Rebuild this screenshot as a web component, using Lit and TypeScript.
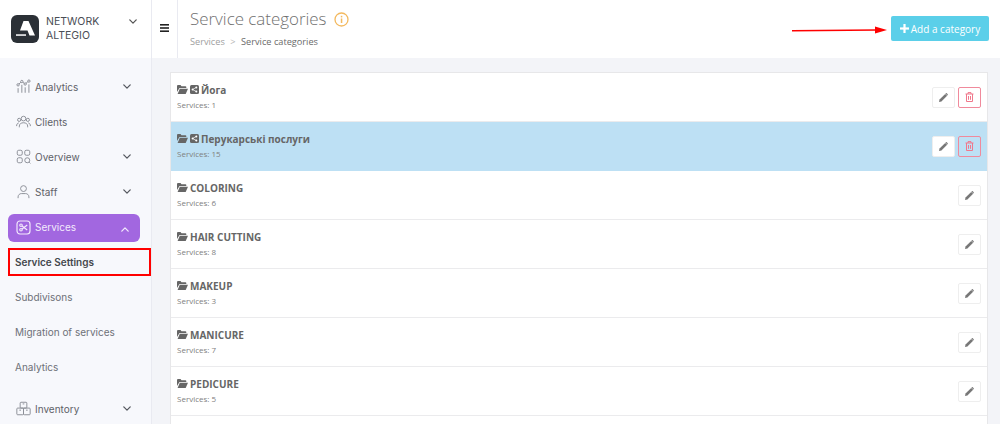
import { LitElement, html, css, svg } from "lit";
import { customElement } from "lit/decorators.js";

const chev = (up = false) => html`<svg class="chev" width="8" height="5" viewBox="0 0 10 6" fill="none" stroke="currentColor" stroke-width="1.600" stroke-linecap="round" stroke-linejoin="round"><path d="${up ? "M1 5l4-4 4 4" : "M1 1l4 4 4-4"}"/></svg>`;

const icons: Record<string, unknown> = {
  analytics: svg`<circle cx="2.500" cy="7" r="1.400"/><circle cx="7" cy="3" r="1.400"/><circle cx="11" cy="6" r="1.400"/><circle cx="15.500" cy="2.500" r="1.400"/><path d="M3.600 6l2.300-2.200M8.100 3.800l1.800 1.400M12 5.200l2.300-2M2.500 11v5.500M7 7v9.500M11 10v6.500M15.500 6.500v10"/>`,
  clients: svg`<circle cx="9" cy="5.500" r="2.800"/><circle cx="3.800" cy="7" r="1.900"/><circle cx="14.200" cy="7" r="1.900"/><path d="M4 16v-1.500C4 12 6 10.500 9 10.500s5 1.500 5 4V16M.7 14.500c0-2.200 1-3.600 2.600-3.800M17.300 14.500c0-2.200-1-3.600-2.600-3.800"/>`,
  overview: svg`<rect x="1.500" y="1.500" width="6" height="6" rx="1.800"/><rect x="10.500" y="1.500" width="6" height="6" rx="1.800"/><rect x="1.500" y="10.500" width="6" height="6" rx="1.800"/><circle cx="13.500" cy="13.500" r="3"/><path d="M15.800 15.800l1.500 1.500"/>`,
  staff: svg`<circle cx="9" cy="5.500" r="3.500"/><path d="M2.500 17v-1.500c0-2.500 2-4 4-4h5c2 0 4 1.500 4 4V17"/>`,
  inventory: svg`<rect x="5" y="1.500" width="8" height="7" rx="1"/><rect x="1" y="8.500" width="8" height="8" rx="1"/><rect x="9" y="8.500" width="8" height="8" rx="1"/><path d="M8 3.500h2M4 11h2M12 11h2"/>`,
};

const sideIcon = (n: string) => html`<svg class="nav-icon" width="15" height="15" viewBox="0 0 18 18" fill="none" stroke="currentColor" stroke-width="1.150">${icons[n]}</svg>`;

const folder = html`<svg class="fi" width="11" height="9" viewBox="0 0 11 9" fill="#666"><path d="M0 1a1 1 0 0 1 1-1h2.500l1 1.200H8.500a.8.8 0 0 1 .8.8V3H2.500L0 7z"/><path d="M2.800 3.700H11L8.700 9H.6z"/></svg>`;
const share = html`<svg class="fi" width="9" height="9" viewBox="0 0 9 9"><rect width="9" height="9" rx="1.500" fill="#666"/><g fill="#fff"><circle cx="6.300" cy="2.400" r="1"/><circle cx="6.300" cy="6.600" r="1"/><circle cx="2.600" cy="4.500" r="1"/></g><path d="M6.300 2.400L2.600 4.500l3.700 2.100" stroke="#fff" stroke-width=".7" fill="none"/></svg>`;
const pencil = html`<svg width="9" height="9" viewBox="0 0 10 10" fill="#777"><path d="M0 10l.6-2.700L6.900 1l2.100 2.100-6.300 6.300z"/><path d="M7.500.4a.9.9 0 0 1 1.200 0l.9.900a.9.9 0 0 1 0 1.200l-.3.300L7.200.7z"/></svg>`;
const trash = html`<svg width="9" height="10" viewBox="0 0 9 10" fill="none" stroke="#f0788c" stroke-width="1"><path d="M.5 2h8M3 2V.6h3V2M1.500 2v7.500h6V2M3.500 4v3.800M5.500 4v3.800"/></svg>`;

const rows = [
  { name: "Йога", n: 1, shared: true },
  { name: "Перукарські послуги", n: 15, shared: true, hl: true },
  { name: "COLORING", n: 6 },
  { name: "HAIR CUTTING", n: 8 },
  { name: "MAKEUP", n: 3 },
  { name: "MANICURE", n: 7 },
  { name: "PEDICURE", n: 5 },
  { name: "", n: -1 },
];

@customElement("app-root")
export class AppRoot extends LitElement {
  static styles = css`
    :host { display: block; width: 1000px; height: 424px; overflow: hidden; position: relative; background: #f3f4f8; font-family: "Open Sans", sans-serif; }
    .app { display: flex; height: 424px; }
    .side { width: 152px; box-sizing: border-box; flex: none; background: #f7f8fc; border-right: 1px solid #e9eaf1; font-family: Inter, sans-serif; font-size: 10px; color: #5f6268; }
    .brand { height: 58px; background: #fff; display: flex; align-items: center; padding-left: 11px; color: #4a4d55; box-sizing: border-box; }
    .logo { width: 28px; height: 28px; flex: none; margin-right: 7px; }
    .brand-name { line-height: 14.500px; font-size: 10.500px; width: 83px; }
    .brand .chev { margin-top: -15px; color: #555; }
    .nav { padding-top: 11px; display: flex; flex-direction: column; }
    .item { height: 35px; display: flex; align-items: center; padding-left: 16px; box-sizing: border-box; }
    .nav-icon { color: #8b8e96; margin-right: 4px; flex: none; }
    .item .lbl { flex: 1; }
    .item .chev { margin-right: 20px; color: #55585f; }
    .active-wrap { height: 35px; display: flex; align-items: center; padding: 2px 11px 0 8px; box-sizing: border-box; }
    .active { flex: 1; height: 28px; background: #a267e0; color: #f3eafc; border-radius: 6px; display: flex; align-items: center; padding-left: 8px; }
    .active .lbl { flex: 1; margin: -2px 0 0 4px; }
    .active .chev { margin-right: 11px; margin-top: 3px; color: #f3eafc; }
    .sub { height: 35px; display: flex; align-items: center; padding-left: 15px; color: #6e7178; }
    .sub.cur { font-weight: 600; color: #44474d; }
    .gap { height: 7px; }
    .main { flex: 1; min-width: 0; display: flex; flex-direction: column; }
    .top { height: 58px; flex: none; background: #fff; display: flex; box-sizing: border-box; }
    .burger { width: 25px; flex: none; border-right: 1px solid #e9eaf1; display: flex; align-items: center; justify-content: center; padding-bottom: 3px; }
    .burger svg { display: block; }
    .title-box { flex: 1; padding: 7px 0 0 12px; }
    .title { font-size: 16.900px; font-weight: 300; line-height: 24px; color: #707070; display: flex; align-items: center; }
    .title svg { margin-left: 8px; }
    .crumbs { font-size: 9.200px; line-height: 12px; margin-top: 5px; color: #a0a0a0; }
    .crumbs i { font-style: normal; margin: 0 5.500px; color: #b5b5b5; }
    .crumbs b { font-weight: 400; color: #6a6a6a; }
    .add { align-self: flex-start; margin: 16px 11px 0 0; height: 25px; width: 98px; background: #5bcfe9; color: #fff; border: 0; border-radius: 2px; font: 400 10px "Open Sans", sans-serif; display: flex; align-items: center; justify-content: center; gap: 2px; padding: 0; white-space: nowrap; }
    .content { flex: 1; padding: 14px 12px 0 18px; overflow: hidden; }
    .list { background: #fff; border: 1px solid #e7e7e9; border-bottom: 0; }
    .row { height: 49px; box-sizing: border-box; display: flex; align-items: center; padding: 0 6px 0 6px; border-bottom: 1px solid #ebebed; }
    .row.hl { background: #bde0f4; border-bottom-color: #bde0f4; }
    .info { flex: 1; padding-bottom: 2px; }
    .name { display: flex; align-items: center; gap: 2px; font-size: 10px; font-weight: 700; color: #666; line-height: 14px; }
    .name .fi { flex: none; }
    .count { font-size: 8px; color: #808080; line-height: 10px; margin-top: 3px; }
    .btn { width: 23px; height: 21px; box-sizing: border-box; border-radius: 2px; background: #fff; border: 1px solid #eeeeee; display: flex; align-items: center; justify-content: center; margin-left: 3px; }
    .btn.del { background: transparent; border: 1px solid #f08a9c; }
    .marker { position: absolute; left: 8px; top: 248px; width: 143px; height: 28px; box-sizing: border-box; border: 2px solid #f00; pointer-events: none; }
    .arrow { position: absolute; left: 792px; top: 24px; }
  `;

  private navItem(icon: string, label: string, hasChev = true) {
    return html`<div class="item">${sideIcon(icon)}<span class="lbl">${label}</span>${hasChev ? chev() : ""}</div>`;
  }

  render() {
    return html`
      <div class="app">
        <aside class="side">
          <div class="brand">
            <svg class="logo" viewBox="0 0 28 28"><rect width="28" height="28" rx="6" fill="#2b3036"/><path d="M12.500 6H17.500L24 20.500H18.500L16.500 15.500H9z" fill="#fff"/><path d="M5 19.300h10v1.500H5z" fill="#fff"/></svg>
            <span class="brand-name">NETWORK<br />ALTEGIO</span>
            ${chev()}
          </div>
          <nav class="nav">
            ${this.navItem("analytics", "Analytics")}
            ${this.navItem("clients", "Clients", false)}
            ${this.navItem("overview", "Overview")}
            ${this.navItem("staff", "Staff")}
            <div class="active-wrap">
              <div class="active">
                <svg width="15" height="15" viewBox="0 0 18 18" fill="none" stroke="#f3eafc" stroke-width="1.400"><rect x="1.200" y="1.200" width="15.600" height="15.600" rx="3.500"/><circle cx="6" cy="6.300" r="1.500"/><circle cx="6" cy="11.700" r="1.500"/><path d="M7.300 7.200L13.500 12M7.300 10.800L13.500 6"/></svg>
                <span class="lbl">Services</span>
                ${chev(true)}
              </div>
            </div>
            <div class="sub cur">Service Settings</div>
            <div class="sub">Subdivisons</div>
            <div class="sub">Migration of services</div>
            <div class="sub">Analytics</div>
            <div class="gap"></div>
            ${this.navItem("inventory", "Inventory")}
          </nav>
        </aside>
        <div class="main">
          <header class="top">
            <div class="burger"><svg width="9" height="8" viewBox="0 0 9 8" fill="#222"><rect width="9" height="1.600"/><rect y="3.200" width="9" height="1.600"/><rect y="6.400" width="9" height="1.600"/></svg></div>
            <div class="title-box">
              <div class="title">Service categories
                <svg width="15" height="15" viewBox="0 0 15 15" fill="none"><circle cx="7.500" cy="7.500" r="6.500" stroke="#f3b95f" stroke-width="1.300"/><rect x="6.800" y="6.500" width="1.500" height="4.500" fill="#f3b95f"/><rect x="6.800" y="3.800" width="1.500" height="1.600" fill="#f3b95f"/></svg>
              </div>
              <div class="crumbs">Services<i>&gt;</i><b>Service categories</b></div>
            </div>
            <button class="add"><svg width="9" height="9" viewBox="0 0 9 9" fill="#fff"><rect y="3.400" width="9" height="2.200"/><rect x="3.400" width="2.200" height="9"/></svg>Add a category</button>
          </header>
          <div class="content">
            <div class="list">
              ${rows.map((r) => r.n < 0 ? html`<div class="row"></div>` : html`
                <div class="row ${r.hl ? "hl" : ""}">
                  <div class="info">
                    <div class="name">${folder}${r.shared ? share : ""}<span>${r.name}</span></div>
                    <div class="count">Services: ${r.n}</div>
                  </div>
                  <div class="btn">${pencil}</div>
                  ${r.shared ? html`<div class="btn del">${trash}</div>` : ""}
                </div>`)}
            </div>
          </div>
        </div>
      </div>
      <div class="marker"></div>
      <svg class="arrow" width="100" height="12" viewBox="0 0 100 12"><path d="M0 6.700L85 6" stroke="#f00" stroke-width="1.500" fill="none"/><path d="M83 2.500L95 6 83 9.500z" fill="#f00"/></svg>
    `;
  }
}
